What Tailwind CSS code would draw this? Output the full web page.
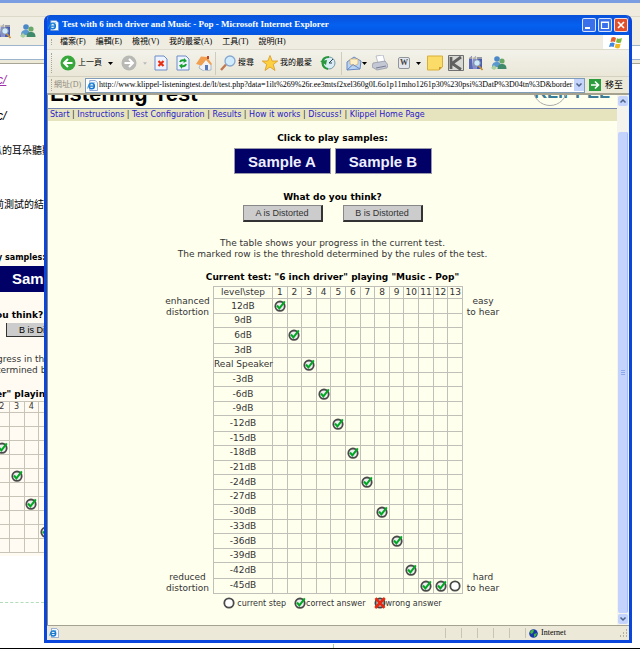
<!DOCTYPE html>
<html lang="zh-Hant">

<head>
  <meta charset="UTF-8" />
  <meta name="viewport" content="width=device-width, initial-scale=1.0"/>
  <title>Test with 6 inch driver and Music - Pop</title>
  <script src="https://cdn.jsdelivr.net/npm/@tailwindcss/browser@4"></script>
</head>

<body class="relative min-h-screen overflow-x-hidden bg-white text-black font-['Liberation_Serif','Noto_Sans_CJK_TC',serif]">

  <!-- Icon sprites -->
  <svg class="hidden">
    <symbol id="step" viewBox="0 0 12 12">
      <circle cx="6" cy="6" r="4.7" fill="#fff" stroke="#4a4a4a" stroke-width="1.8"/>
    </symbol>
    <symbol id="correct" viewBox="0 0 12 12">
      <circle cx="6" cy="6.2" r="4.7" fill="#eee" stroke="#4a4a4a" stroke-width="1.8"/>
      <path d="M3 5.5L5.4 8.4L10.8 1.4" fill="none" stroke="#00a824" stroke-width="2"/>
    </symbol>
    <symbol id="wrong" viewBox="0 0 12 12">
      <circle cx="6" cy="6" r="4.6" fill="#bbb" stroke="#444" stroke-width="1.8"/>
      <path d="M1.5 1.2L10.5 10.8M10.8 1L1.2 11" fill="none" stroke="#e82810" stroke-width="2.6"/>
    </symbol>
    <symbol id="ie" viewBox="0 0 12 12">
      <path d="M3 .5H9L11.5 3V11.5H3Z" fill="#f4f8ff" stroke="#6a8cc8" stroke-width=".8"/>
      <circle cx="5" cy="6.5" r="3" fill="none" stroke="#1878d0" stroke-width="1.7"/>
      <path d="M2.5 6.6H7.8" stroke="#1878d0" stroke-width="1.3"/>
      <path d="M.6 9.5C0 7 4 3 8.5 3" fill="none" stroke="#40a0e0" stroke-width=".8"/>
    </symbol>
    <symbol id="books" viewBox="0 0 16 16">
      <path d="M1 3L4 1L5 14L1 14Z" fill="#5a68b8"/>
      <path d="M5 3L8 1L9 14H5Z" fill="#8890cc"/>
      <path d="M9 2H14V14H9Z" fill="#4a5cb0"/>
      <path d="M1 3H14" stroke="#e0d8a0" stroke-width="1"/>
      <path d="M10.5 10.5L14.5 15" stroke="#c89030" stroke-width="1.8"/>
      <circle cx="9" cy="8" r="3.3" fill="#cfeaf8" stroke="#7a8ca8"/>
    </symbol>
    <symbol id="people" viewBox="0 0 16 16">
      <circle cx="6" cy="4" r="2.8" fill="#4a88c8"/>
      <path d="M1 12C1 8 3 7 6 7S10 9 10 12Z" fill="#5a98d0"/>
      <circle cx="11" cy="6" r="2.6" fill="#6aa868"/>
      <path d="M6.5 14C6.5 10 8.5 9 11 9S15.5 10 15.5 14Z" fill="#3e8a6a"/>
      <path d="M0 13L3 10L6 13L3 15Z" fill="#a8d0a0"/>
    </symbol>
  </svg>

  <!-- Window behind -->
  <div class="absolute inset-0 flex flex-col overflow-hidden">
    <div class="h-[3px] bg-[#7b9ee3]"></div>
    <div class="h-[14px] bg-[#efecdf] border-b border-[#dcd9c8]"></div>
    <div class="h-7 bg-[#f0eee2] flex items-center">
      <svg class="w-4 h-4 -ml-1"><use href="#books"/></svg>
      <svg class="w-4 h-4 ml-2"><use href="#people"/></svg>
    </div>
    <div class="h-[15px] bg-white border-y border-[#9cb4cc]"></div>
    <div class="h-1 bg-[#ece9d8] border-b border-[#a8a594]"></div>
    <div class="w-11 overflow-hidden whitespace-nowrap text-[10px] leading-3 font-['Liberation_Sans','Noto_Sans_CJK_TC',sans-serif]">
      <a href="#" class="block mt-[10px] -ml-[3px] text-[12px] italic underline text-[#a030a8]">c/</a>
      <p class="mt-6 -ml-[3px] text-[12px] italic">c/</p>
      <p class="mt-[23px] -ml-2">瓜的耳朵聽聽</p>
      <p class="mt-[42px] -ml-[6px]">前測試的結果</p>
      <div class="mt-[39px] h-[306px] bg-[#fffbf3] text-[9px] font-['DejaVu_Sans',sans-serif]">
        <p class="pt-[2px] -ml-[3px] h-4 text-[8px] font-bold">y samples:</p>
        <div class="h-[26px] bg-[#000066] text-white font-bold text-[15px] leading-[26px] pl-3 font-['Liberation_Sans',sans-serif]">Sample B</div>
        <p class="mt-[17px] -ml-1 text-[9px] font-bold">ou think?</p>
        <div class="mt-[2px] ml-[6px] h-[14px] pl-3 bg-[#ccc] border-l border-b border-[#333] text-[9px] leading-[14px] font-['Liberation_Sans',sans-serif]">B is Distorted</div>
        <p class="mt-[17px] -ml-[3px] leading-[11px] text-[#333]">gress in the</p>
        <p class="-ml-[3px] leading-[11px] text-[#333]">termined by</p>
        <p class="mt-3 -ml-1 font-bold">er" playing</p>
        <table class="mt-px -ml-[6px] w-[60px] table-fixed border-collapse text-center text-[8px] leading-[10px] text-[#333]">
          <tbody id="backRows"></tbody>
        </table>
      </div>
      <div class="mt-[46px] border-t border-dashed border-[#b0dcb8]"></div>
    </div>
    <div class="mt-auto ml-[333px] h-1 border-l border-[#a8d0a8]"></div>
    <div class="h-[2px] bg-black"></div>
  </div>

  <!-- Browser window -->
  <div class="relative mt-[15px] ml-11 mr-2 mb-[7px] border-x-[3px] border-b-[3px] border-[#0a46dc] rounded-t-md bg-[#ece9d8] overflow-hidden">

    <!-- Title bar -->
    <div class="-mx-[3px] h-5 px-1 flex items-center gap-[3px] bg-linear-to-b from-[#0a50d8] via-[#0560f0] to-[#0555e0] text-white">
      <svg class="w-[11px] h-[11px]"><use href="#ie"/></svg>
      <h1 class="grow whitespace-nowrap text-[9px] font-bold">Test with 6 inch driver and Music - Pop - Microsoft Internet Explorer</h1>
      <div class="flex gap-[2px]">
        <button aria-label="Minimize" class="w-[14px] h-[14px] rounded-xs border border-white/80 bg-[#3a70ea]"><svg viewBox="0 0 12 12"><path d="M2 9H7" stroke="#fff" stroke-width="2"/></svg></button>
        <button aria-label="Maximize" class="w-[14px] h-[14px] rounded-xs border border-white/80 bg-[#3a70ea]"><svg viewBox="0 0 12 12"><path d="M2.5 3H9.5V9.5H2.5ZM2 3.5H10" fill="none" stroke="#fff" stroke-width="1.2"/></svg></button>
        <button aria-label="Close" class="w-[14px] h-[14px] rounded-xs border border-white/80 bg-[#e0502c]"><svg viewBox="0 0 12 12"><path d="M3 3L9 9M9 3L3 9" stroke="#fff" stroke-width="1.6"/></svg></button>
      </div>
    </div>

    <!-- Menu -->
    <div class="h-[15px] pl-1 flex items-stretch bg-[#efede2] border-b border-[#dedbcc] text-[8px] leading-[14px] whitespace-nowrap">
      <span class="my-1 border-l border-dotted border-[#a8a698]"></span>
      <nav class="grow flex gap-[10px] pl-2">
        <a href="#">檔案(F)</a>
        <a href="#">編輯(E)</a>
        <a href="#">檢視(V)</a>
        <a href="#">我的最愛(A)</a>
        <a href="#">工具(T)</a>
        <a href="#">說明(H)</a>
      </nav>
      <div class="w-[26px] bg-white flex items-center justify-center">
        <svg class="w-[14px] h-[13px]" viewBox="0 0 14 13">
          <path d="M2.5 1.5Q5 .5 7 2L6 6Q4 5 1.5 6Z" fill="#e8602c"/>
          <path d="M8 2.3Q10.500 3.500 13 2L12 6.500Q9.500 7.500 7 6.300Z" fill="#78b83c"/>
          <path d="M1.200 7Q3.500 6 5.700 7.200L4.700 11Q2.500 10 0 11Z" fill="#4088e0"/>
          <path d="M6.700 7.500Q9 8.500 11.700 7.500L10.500 12Q8 13 5.700 11.600Z" fill="#f0b820"/>
        </svg>
      </div>
    </div>

    <!-- Toolbar -->
    <div class="h-[27px] pl-1 flex items-center bg-linear-to-b from-[#f3f2ea] to-[#eae7d8] border-b border-[#d4d1c0] text-[8px] whitespace-nowrap">
      <span class="h-5 border-l border-dotted border-[#a8a698]"></span>
      <button class="ml-2 flex items-center gap-[2px]">
        <svg class="w-4 h-4" viewBox="0 0 16 16"><circle cx="8" cy="8" r="7.500" fill="#38a83c"/><path d="M12.500 8H4.500M8 4L4 8L8 12" fill="none" stroke="#fff" stroke-width="2"/></svg>
        上一頁
      </button>
      <svg class="ml-[6px] w-[5px] h-[3px]" viewBox="0 0 5 3"><path d="M0 0H5L2.500 3Z" fill="#000"/></svg>
      <button aria-label="Forward" class="ml-2"><svg class="w-4 h-4" viewBox="0 0 16 16"><circle cx="8" cy="8" r="7.500" fill="#b8b8b4"/><path d="M3.500 8H11.500M8 4L12 8L8 12" fill="none" stroke="#fff" stroke-width="2"/></svg></button>
      <svg class="ml-[6px] w-1 h-[3px]" viewBox="0 0 5 3"><path d="M0 0H5L2.500 3Z" fill="#bbb"/></svg>
      <button aria-label="Stop" class="ml-[6px]"><svg class="w-4 h-4" viewBox="0 0 16 16"><path d="M2 1H11L14 4V15H2Z" fill="#eef4ff" stroke="#6c8cc8"/><path d="M5.500 6L10.500 11M10.500 6L5.500 11" stroke="#e83010" stroke-width="2.200"/></svg></button>
      <button aria-label="Refresh" class="ml-[6px]"><svg class="w-4 h-4" viewBox="0 0 16 16"><path d="M2 1H11L14 4V15H2Z" fill="#eef4ff" stroke="#6c8cc8"/><path d="M5 7Q6 4.500 10 5.500M11 9Q10 12 6 11" fill="none" stroke="#18a030" stroke-width="2"/><path d="M9 3L12 6L8.500 8ZM7 14L4 10.500L7.500 8.500Z" fill="#18a030"/></svg></button>
      <button aria-label="Home" class="ml-[5px]"><svg class="w-4 h-4" viewBox="0 0 16 16"><path d="M5 8L10 4L15 9V15L8 16L3 13Z" fill="#f0f4fa" stroke="#90a0b8" stroke-width=".7"/><path d="M0 9L5 1.500L11 2L16 9L14.500 10L10 5L5.500 10.500Z" fill="#f0a050"/><path d="M11 1H13V4H11Z" fill="#c04828"/><path d="M9 10H12V15H9Z" fill="#5878b8"/></svg></button>
      <span class="ml-[3px] h-[23px] border-l border-[#cfccbc]"></span>
      <button class="ml-1 flex items-center gap-[2px]">
        <svg class="w-4 h-4" viewBox="0 0 16 16"><path d="M1 15L6 9.500" stroke="#c07850" stroke-width="2.400"/><circle cx="10" cy="6" r="5" fill="#d0ecfc" stroke="#88a8d0" stroke-width="1.300"/></svg>
        搜尋
      </button>
      <button class="ml-2 flex items-center gap-[2px]">
        <svg class="w-4 h-4" viewBox="0 0 16 16"><path d="M8 .5L10.200 6H15.700L11.300 9.500L13 15.500L8 12L3 15.500L4.700 9.500L.3 6H5.800Z" fill="#fcd040" stroke="#d89820" stroke-width=".8"/></svg>
        我的最愛
      </button>
      <button aria-label="History" class="ml-2"><svg class="w-4 h-4" viewBox="0 0 16 16"><circle cx="9" cy="8" r="6" fill="#d8eef4" stroke="#7898a8"/><path d="M9 8L13 4M9 8H12" stroke="#345" stroke-width="1"/><path d="M9 2Q2 2 2.500 8Q3 13 8 14" fill="none" stroke="#28983c" stroke-width="2.200"/><path d="M0 6L6 10L7 5Z" fill="#28983c"/></svg></button>
      <span class="ml-[5px] h-[23px] border-l border-[#cfccbc]"></span>
      <button aria-label="Mail" class="ml-1"><svg class="w-4 h-4" viewBox="0 0 16 16"><path d="M1 7L8 2L15 6L14 14L1 15Z" fill="#b8d4f4" stroke="#6888c0"/><path d="M4 4H12V9L8 11L4 9Z" fill="#fcf0c8" stroke="#d0a868" stroke-width=".7"/><path d="M1 15L7 9.500L14 14" fill="none" stroke="#6888c0"/></svg></button>
      <svg class="w-[5px] h-[3px]" viewBox="0 0 5 3"><path d="M0 0H5L2.500 3Z" fill="#000"/></svg>
      <button aria-label="Print" class="ml-[5px]"><svg class="w-4 h-4" viewBox="0 0 16 16"><path d="M4 1L11 0L13 7L6 8Z" fill="#fff" stroke="#a0a8b8" stroke-width=".7"/><path d="M1 8L13 6L16 10L15 13L5 15L0 12Z" fill="#c4c8d4" stroke="#8c90a0" stroke-width=".7"/><path d="M4 13L14 11" stroke="#787c90"/></svg></button>
      <button aria-label="Edit" class="ml-[10px] w-3 h-3 rounded-xs border border-[#90969c] bg-[#e4e8ec] text-[8px] leading-[10px] font-bold text-[#444]">W</button>
      <svg class="ml-[6px] w-[5px] h-[3px]" viewBox="0 0 5 3"><path d="M0 0H5L2.500 3Z" fill="#000"/></svg>
      <button aria-label="Note" class="ml-[6px]"><svg class="w-4 h-4" viewBox="0 0 16 16"><path d="M.5 1H15.500V12L12 15H.5Z" fill="#fcdc68" stroke="#d8b038"/><path d="M15 12H12V15Z" fill="#c89828"/></svg></button>
      <button aria-label="K" class="ml-[5px]"><svg class="w-4 h-4" viewBox="0 0 16 16"><path d="M.5.5H15.500V15.500H.5Z" fill="#d8d8d4" stroke="#707070"/><path d="M3 2V14M13 2L4 8.500L13 14.500" fill="none" stroke="#606060" stroke-width="2.800"/></svg></button>
      <button aria-label="Research" class="ml-1"><svg class="w-4 h-4"><use href="#books"/></svg></button>
      <button aria-label="Messenger" class="ml-[7px]"><svg class="w-4 h-4"><use href="#people"/></svg></button>
    </div>

    <!-- Address bar -->
    <div class="h-[18px] pl-1 flex items-center bg-[#ece9d8] border-b-2 border-[#a5a290] text-[9px] whitespace-nowrap">
      <span class="h-3 border-l border-dotted border-[#a8a698]"></span>
      <label for="url" class="ml-[2px] text-[8px] leading-3 text-[#8c8a80]">網址(D)</label>
      <div class="ml-1 grow min-w-0 h-[15px] pl-px flex items-center gap-px bg-white border border-[#7f9db9]">
        <svg class="w-[11px] h-[11px] shrink-0"><use href="#ie"/></svg>
        <input id="url" type="text" class="grow min-w-0 h-3 text-[8px]" value="http://www.klippel-listeningtest.de/lt/test.php?data=1ilt%269%26r.ee3mtsf2xel360g0L6o1p11mho1261p30%230psi%3DatP%3D04tn%3D&amp;borderLevel="/>
        <button aria-label="Show addresses" class="w-[10px] h-3 shrink-0 bg-[#c4d4fa] flex items-center justify-center"><svg class="w-2 h-2" viewBox="0 0 8 8"><path d="M1.500 2.500L4 5L6.500 2.500" fill="none" stroke="#4d6185" stroke-width="1.500"/></svg></button>
      </div>
      <button class="mx-1 flex items-center gap-1 pr-[2px] leading-3">
        <svg class="w-3 h-3" viewBox="0 0 12 12"><path d="M0 0H12V12H0Z" fill="#2c9c3c"/><path d="M2 6H9M6 2.500L9.500 6L6 9.500" fill="none" stroke="#fff" stroke-width="1.600"/></svg>
        移至
      </button>
    </div>

    <!-- Page -->
    <div class="flex border-l border-[#8a8878] font-['DejaVu_Sans',sans-serif] text-[9px] leading-[11px] text-[#333]">
      <main class="grow min-w-0 bg-[#ffffee] pb-4">
        <div class="h-[14px] px-[2px] flex items-end justify-between overflow-hidden border-b border-[#7888b0]">
          <h2 class="text-[22px] leading-7 font-bold text-black font-['Liberation_Sans',sans-serif]">Listening Test</h2>
          <div class="relative h-8 w-[81px]">
            <svg class="absolute left-0 bottom-[2px] w-8 h-6" viewBox="0 0 32 24"><circle cx="16" cy="6.5" r="17" fill="none" stroke="#aaa"/></svg>
            <span class="block text-[18px] leading-8 font-bold text-[#3a7c98] font-['Liberation_Sans',sans-serif]">KLIPPEL</span>
          </div>
        </div>
        <nav class="h-3 pl-[2px] bg-[#e6e4bf] text-[8px] leading-3 whitespace-nowrap">
          <a href="#" class="text-[#2a20c8]">Start</a> |
          <a href="#" class="text-[#2a20c8]">Instructions</a> |
          <a href="#" class="text-[#2a20c8]">Test Configuration</a> |
          <a href="#" class="text-[#2a20c8]">Results</a> |
          <a href="#" class="text-[#2a20c8]">How it works</a> |
          <a href="#" class="text-[#2a20c8]">Discuss!</a> |
          <a href="#" class="text-[#2a20c8]">Klippel Home Page</a>
        </nav>

        <h3 class="mt-3 text-center text-[9px] font-bold text-black">Click to play samples:</h3>
        <div class="mt-1 flex justify-center gap-1">
          <button class="w-[97px] h-[26px] bg-[#000066] border border-[#99a] text-[15px] font-bold text-[#eef] font-['Liberation_Sans',sans-serif]">Sample A</button>
          <button class="w-[97px] h-[26px] bg-[#000066] border border-[#99a] text-[15px] font-bold text-[#eef] font-['Liberation_Sans',sans-serif]">Sample B</button>
        </div>

        <h3 class="mt-[18px] text-center text-[9px] font-bold text-black">What do you think?</h3>
        <div class="mt-[2px] flex justify-center gap-5">
          <button class="w-20 h-[17px] bg-[#ccc] border border-r-2 border-b-2 border-[#333] border-t-[#888] border-l-[#888] text-[9px] font-['Liberation_Sans',sans-serif]">A is Distorted</button>
          <button class="w-20 h-[17px] bg-[#ccc] border border-r-2 border-b-2 border-[#333] border-t-[#888] border-l-[#888] text-[9px] font-['Liberation_Sans',sans-serif]">B is Distorted</button>
        </div>

        <p class="mt-4 text-center">The table shows your progress in the current test.<br/>The marked row is the threshold determined by the rules of the test.</p>

        <h3 class="mt-3 text-center text-[9px] font-bold text-black">Current test: "6 inch driver" playing "Music - Pop"</h3>
        <div class="mt-[3px] flex justify-center gap-1 text-center">
          <div class="w-[43px] pt-[10px] flex flex-col justify-between items-center">
            <p>enhanced<br/>distortion</p>
            <p>reduced<br/>distortion</p>
          </div>
          <table class="w-[250px] h-[308px] table-fixed border-collapse text-[9px] leading-[11px]">
            <thead id="stepHead"></thead>
            <tbody id="stepRows"></tbody>
          </table>
          <div class="w-8 pt-[10px] flex flex-col justify-between items-center whitespace-nowrap">
            <p>easy<br/>to hear</p>
            <p>hard<br/>to hear</p>
          </div>
        </div>

        <!-- Legend -->
        <div class="mt-[3px] flex justify-center gap-2 text-[8px]">
          <span class="flex items-center gap-[2px]"><svg class="w-3 h-3"><use href="#step"/></svg>current step</span>
          <span class="flex items-center"><svg class="w-3 h-3"><use href="#correct"/></svg>correct answer</span>
          <span class="flex items-center"><svg class="w-3 h-3"><use href="#wrong"/></svg>wrong answer</span>
        </div>
      </main>

      <!-- Scrollbar -->
      <div class="w-3 shrink-0 flex flex-col bg-[#f4f3ee] p-px">
        <div class="h-[10px] rounded-xs bg-[#c4d4fc] flex items-center justify-center"><svg class="w-2 h-2" viewBox="0 0 8 8"><path d="M1.500 5.500L4 3L6.500 5.500" fill="none" stroke="#4d6185" stroke-width="1.500"/></svg></div>
        <div class="mt-[26px] mb-px grow rounded-xs bg-[#c4d3fc] border-r border-[#a8bcf0] flex flex-col items-center justify-center gap-px">
          <span class="w-1 border-t border-[#8ca8ec]"></span>
          <span class="w-1 border-t border-[#8ca8ec]"></span>
          <span class="w-1 border-t border-[#8ca8ec]"></span>
        </div>
        <div class="h-[10px] rounded-xs bg-[#c4d4fc] flex items-center justify-center"><svg class="w-2 h-2" viewBox="0 0 8 8"><path d="M1.500 2.500L4 5L6.500 2.500" fill="none" stroke="#4d6185" stroke-width="1.500"/></svg></div>
      </div>
    </div>

    <!-- Status bar -->
    <div class="h-[15px] pl-[2px] flex items-center border-t border-[#a5a290] bg-[#ece9d8] text-[8px]">
      <svg class="w-[10px] h-[10px]"><use href="#ie"/></svg>
      <div class="ml-auto flex items-center">
        <span class="w-4 h-[10px] border-l border-[#c8c5b4]"></span>
        <span class="w-4 h-[10px] border-l border-[#c8c5b4]"></span>
        <span class="w-4 h-[10px] border-l border-[#c8c5b4]"></span>
        <span class="w-4 h-[10px] border-l border-[#c8c5b4]"></span>
        <span class="w-4 h-[10px] border-l border-[#c8c5b4]"></span>
        <span class="w-[95px] pl-[3px] flex items-center gap-[3px] border-l border-[#c8c5b4] leading-[10px]">
          <svg class="w-[9px] h-[9px]" viewBox="0 0 9 9"><circle cx="4.500" cy="4.500" r="4.300" fill="#1838a8"/><path d="M1 3Q3 0 5 1L4 4L2 5ZM5 5L8 4L7 7L5 8Z" fill="#40b840"/></svg>
          Internet
        </span>
        <svg class="w-2 h-2 mr-px" viewBox="0 0 8 8"><path d="M6 1h1M3 4h1M6 4h1M0 7h1M3 7h1M6 7h1" stroke="#a09d8c" stroke-width="1.500"/></svg>
      </div>
    </div>
  </div>

  <script>
    const levels = ['12dB', '9dB', '6dB', '3dB', 'Real Speaker', '-3dB', '-6dB', '-9dB', '-12dB', '-15dB', '-18dB', '-21dB', '-24dB', '-27dB', '-30dB', '-33dB', '-36dB', '-39dB', '-42dB', '-45dB'];
    const steps = [1, 2, 3, 4, 5, 6, 7, 8, 9, 10, 11, 12, 13];

    function icon(id) {
      return `<svg class="w-3 h-3 mx-auto"><use href="#${id}"/></svg>`;
    }

    function mark(row, step) {
      if (row === 19 && step === 13) return icon('step');
      if (row === 19 && step > 10) return icon('correct');
      return step < 11 && row === (step - 1) * 2 ? icon('correct') : '';
    }

    document.getElementById('stepHead').innerHTML = `
      <tr>
        <th class="w-[59px] h-3 p-0 border border-[#c0c0b8] font-normal">level\\step</th>
        ${steps.map(s => `<th class="h-3 p-0 border border-[#c0c0b8] font-normal">${s}</th>`).join('')}
      </tr>`;

    document.getElementById('stepRows').innerHTML = levels.map((level, row) => `
      <tr>
        <th class="p-0 border border-[#c0c0b8] font-normal whitespace-nowrap">${level}</th>
        ${steps.map(s => `<td class="p-0 border border-[#c0c0b8]">${mark(row, s)}</td>`).join('')}
      </tr>`).join('');

    // the table of the page behind, only its first columns are in view
    let back = '<tr>' + [2, 3, 4, 5].map(s => `<td class="h-[11px] p-0 border border-[#c8c4b8]">${s}</td>`).join('') + '</tr>';
    for (let row = 1; row <= 10; row++) {
      back += '<tr>' + [2, 3, 4, 5].map(s => `<td class="h-[14px] p-0 border border-[#c8c4b8]">${row === s * 2 - 1 ? icon('correct') : ''}</td>`).join('') + '</tr>';
    }
    document.getElementById('backRows').innerHTML = back;
  </script>

</body>

</html>
